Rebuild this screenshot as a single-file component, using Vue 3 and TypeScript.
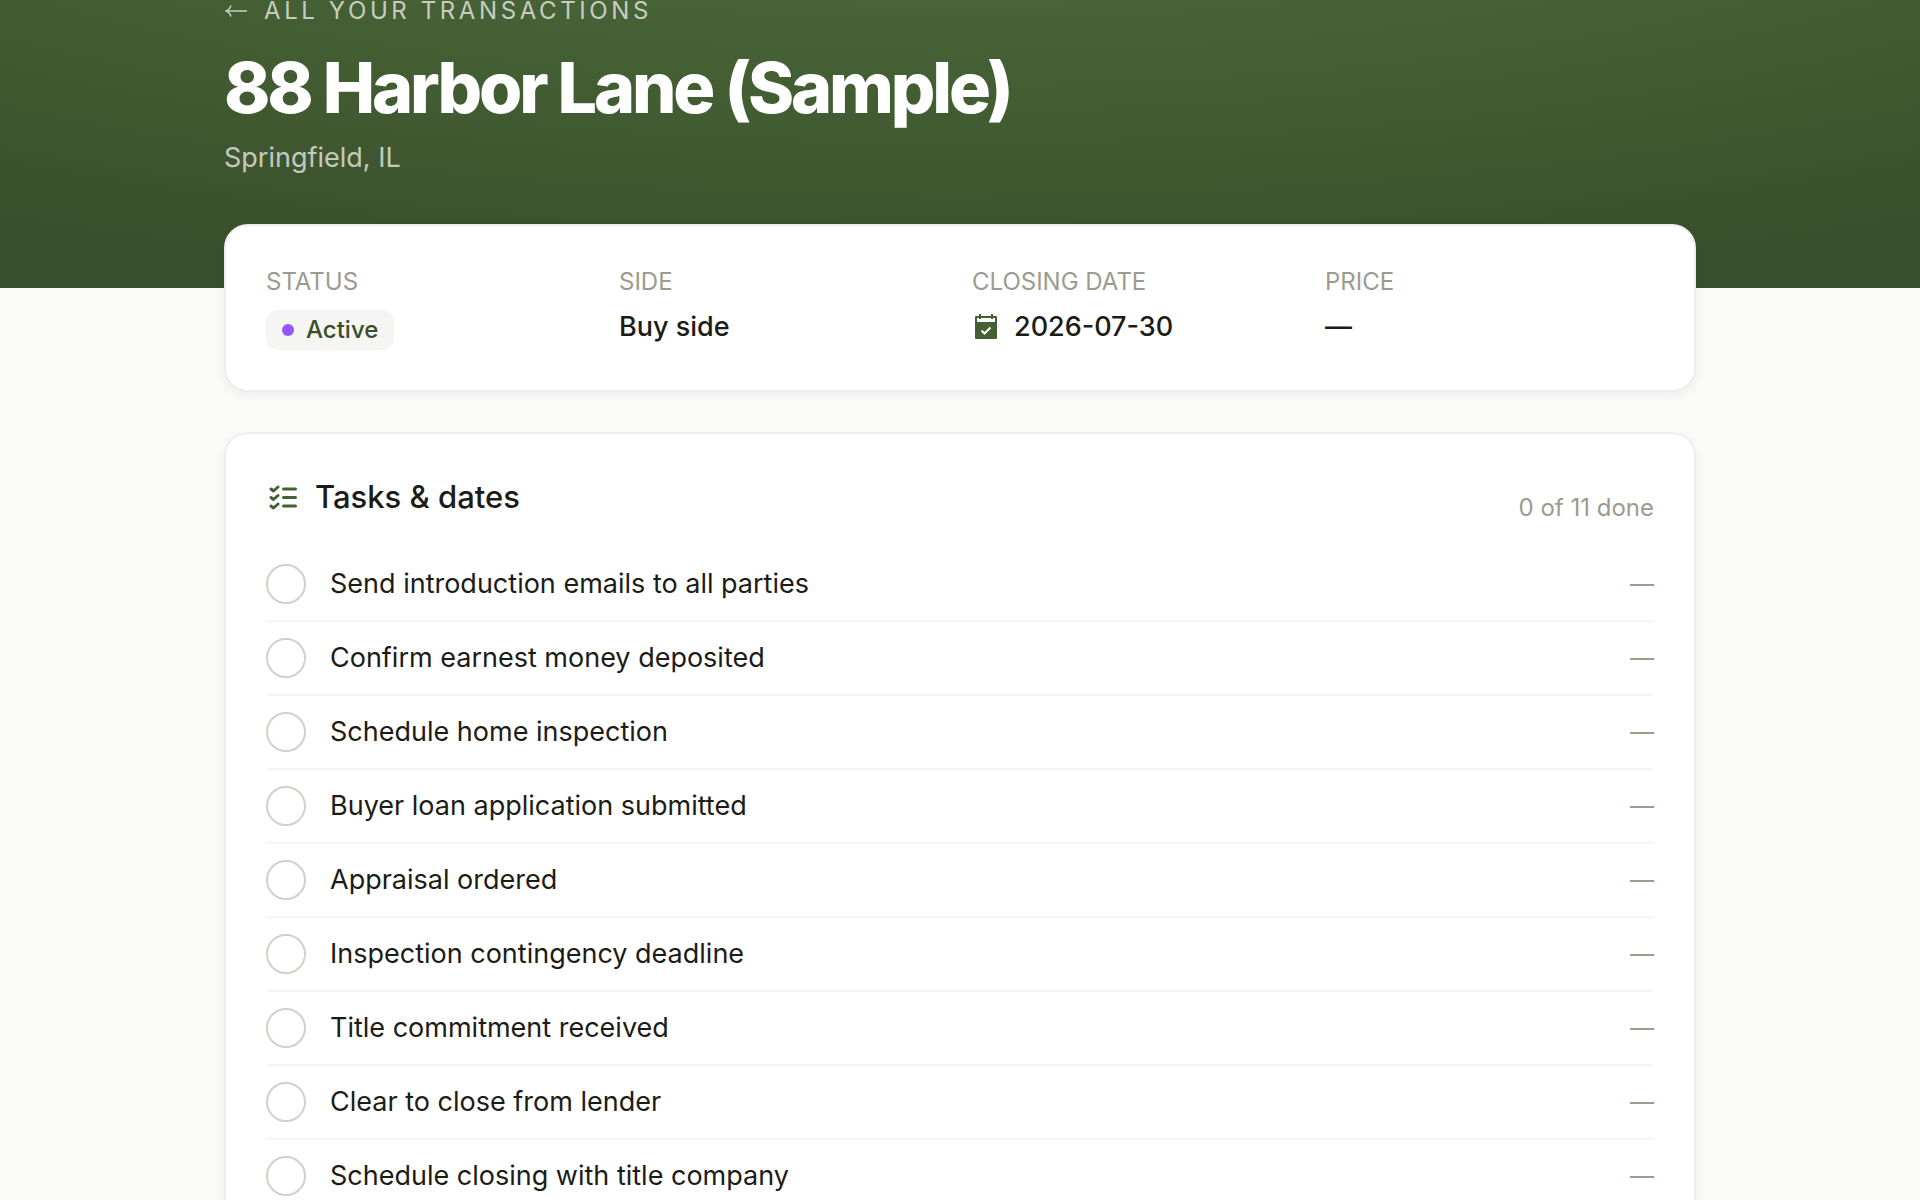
<script setup lang="ts">
import { ref } from 'vue'

interface Task {
  id: string
  title: string
  done: boolean
}

const TOTAL_TASKS = 11

const tasks = ref<Task[]>(
  [
    'Send introduction emails to all parties',
    'Confirm earnest money deposited',
    'Schedule home inspection',
    'Buyer loan application submitted',
    'Appraisal ordered',
    'Inspection contingency deadline',
    'Title commitment received',
    'Clear to close from lender',
    'Schedule closing with title company',
  ].map((title, i) => ({ id: `task-${i + 1}`, title, done: false })),
)
</script>

<template>
  <div class="page">
    <header class="hero">
      <div class="container">
        <a class="back" href="#">
          <svg class="back-arrow" viewBox="0 0 24 14" aria-hidden="true">
            <path d="M23 7H1.5M7 1.5C6 4.500 4 6.500 1.500 7C4 7.500 6 9.500 7 12.500" />
          </svg>
          <span>ALL YOUR TRANSACTIONS</span>
        </a>
        <h1>88 Harbor Lane (Sample)</h1>
        <p class="place">Springfield, IL</p>
      </div>
    </header>

    <main class="container content">
      <section class="card">
        <dl class="facts">
          <div class="fact">
            <dt>STATUS</dt>
            <dd><span class="pill"><i class="dot"></i>Active</span></dd>
          </div>
          <div class="fact">
            <dt>SIDE</dt>
            <dd>Buy side</dd>
          </div>
          <div class="fact">
            <dt>CLOSING DATE</dt>
            <dd class="date">
              <svg class="calendar" viewBox="0 0 24 26" aria-hidden="true">
                <path fill-rule="evenodd" d="M2 2H5V0H7V2H17V0H19V2H22Q23 2 23 3V24Q23 25 22 25H2Q1 25 1 24V3Q1 2 2 2ZM3 4V8H21V4H19V5H17V4H7V5H5V4Z" />
                <path class="tick" d="M7.500 16.500L10.500 19.500L16.500 13.500" />
              </svg>
              2026-07-30
            </dd>
          </div>
          <div class="fact">
            <dt>PRICE</dt>
            <dd>—</dd>
          </div>
        </dl>
      </section>

      <section class="card">
        <div class="tasks-head">
          <h2>
            <svg class="list-icon" viewBox="0 0 28 26" aria-hidden="true">
              <path d="M2 5L4.500 7L9 3M2 13.500L4.500 15.500L9 11.500M2 22L4.500 24L9 20M14.500 5H26.500M14.500 13.500H26.500M14.500 22H26.500" />
            </svg>
            Tasks &amp; dates
          </h2>
          <span class="progress">0 of {{ TOTAL_TASKS }} done</span>
        </div>
        <ul class="tasks">
          <li v-for="task in tasks" :key="task.id" class="task">
            <input :id="task.id" v-model="task.done" type="checkbox" />
            <label :for="task.id">{{ task.title }}</label>
            <span class="due">—</span>
          </li>
        </ul>
      </section>
    </main>
  </div>
</template>

<style>
body {
  margin: 0;
  background: #fafaf8;
}
</style>

<style scoped>
.page {
  height: 100vh;
  overflow: hidden;
  background: #fafaf8;
  color: #1c1c17;
  font-family: Inter, "Liberation Sans", sans-serif;
  font-size: 27px;
  line-height: 40px;
}

.container {
  box-sizing: border-box;
  max-width: 1472px;
  margin: 0 auto;
}

.hero {
  padding-bottom: 110px;
  background: radial-gradient(ellipse 103% 195% at 50% -90%, #577641, #384f2b);
}

.back {
  display: flex;
  align-items: center;
  gap: 16px;
  color: rgba(255, 255, 255, 0.7);
  font-size: 24px;
  line-height: 22px;
  letter-spacing: 0.15em;
  text-decoration: none;
}

.back-arrow {
  width: 24px;
  height: 14px;
  fill: none;
  stroke: currentColor;
  stroke-width: 1.5;
}

h1 {
  margin: 28px 0 0;
  color: #fff;
  font-size: 70px;
  font-weight: 800;
  line-height: 76px;
  letter-spacing: -0.045em;
}

.place {
  margin: 12px 0 0;
  color: rgba(255, 255, 255, 0.7);
}

.content {
  display: flex;
  flex-direction: column;
  gap: 40px;
  margin-top: -64px;
}

.card {
  padding: 40px;
  border: 2px solid #eeeeec;
  border-radius: 24px;
  background: #fff;
  box-shadow: 0 4px 12px rgba(28, 28, 23, 0.05);
}

.facts {
  display: grid;
  grid-template-columns: repeat(4, 1fr);
  gap: 24px;
  margin: 0;
}

dt {
  color: #9b9b8f;
  font-size: 24px;
  line-height: 32px;
}

dd {
  margin: 8px 0 0;
  font-weight: 500;
  line-height: 42px;
}

.fact:first-child dd {
  display: flex;
  margin-top: 12px;
  line-height: 40px;
}

.pill {
  display: flex;
  align-items: center;
  gap: 12px;
  padding: 0 16px;
  border-radius: 12px;
  background: #f5f5f3;
  color: #384f2b;
  font-size: 24px;
}

.dot {
  width: 12px;
  height: 12px;
  border-radius: 50%;
  background: #9159ff;
}

.date {
  display: flex;
  align-items: center;
  gap: 16px;
}

.calendar {
  width: 24px;
  height: 26px;
  margin-left: 2px;
  fill: #456134;
}

.tick {
  fill: none;
  stroke: #fff;
  stroke-width: 2;
}

.tasks-head {
  display: flex;
  align-items: flex-end;
  justify-content: space-between;
  min-height: 50px;
}

h2 {
  display: flex;
  align-items: center;
  align-self: flex-start;
  gap: 18px;
  margin: 0;
  font-size: 31px;
  font-weight: 500;
  line-height: 46px;
}

.list-icon {
  width: 28px;
  height: 26px;
  margin-left: 3px;
  fill: none;
  stroke: #456134;
  stroke-width: 3;
  stroke-linecap: round;
  stroke-linejoin: round;
}

.progress {
  color: #9b9b8f;
  font-size: 24px;
  line-height: 32px;
}

.tasks {
  margin: 24px 0 0;
  padding: 0;
  list-style: none;
}

.task {
  display: flex;
  align-items: center;
  gap: 24px;
  padding: 16px 0;
  border-bottom: 2px solid #f5f5f3;
}

.task input {
  box-sizing: border-box;
  width: 40px;
  height: 40px;
  margin: 0;
  border: 2px solid #d1d1cb;
  border-radius: 50%;
  background: #fff;
  appearance: none;
}

.task input:checked {
  border-color: #456134;
  background: #456134;
}

.task label {
  flex: 1;
}

.due {
  color: #9b9b8f;
  font-size: 24px;
}
</style>
